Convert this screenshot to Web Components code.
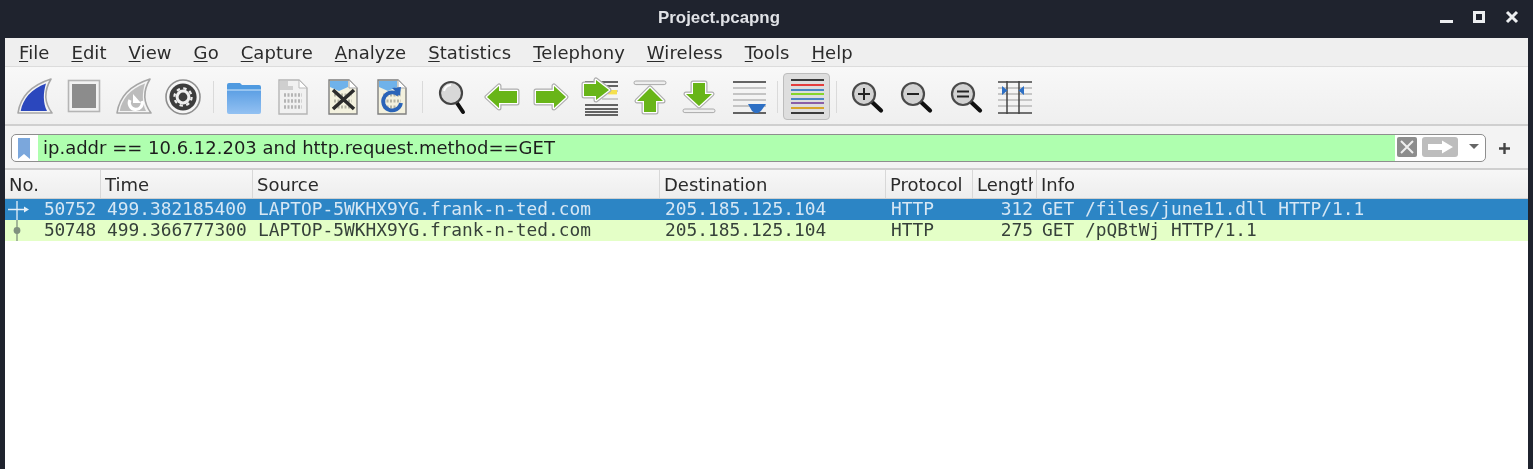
<!DOCTYPE html>
<html>
<head>
<meta charset="utf-8">
<title>Project.pcapng</title>
<style>
  html, body { margin: 0; height: 100%; background: #1f232e; overflow: hidden; }
  body { font-family: "DejaVu Sans", sans-serif; }
</style>
</head>
<body>
<ws-window title="Project.pcapng">
  <ws-menubar items="File,Edit,View,Go,Capture,Analyze,Statistics,Telephony,Wireless,Tools,Help"></ws-menubar>
  <ws-toolbar></ws-toolbar>
  <ws-filter value="ip.addr == 10.6.12.203 and http.request.method==GET"></ws-filter>
  <ws-packets></ws-packets>
</ws-window>

<script>
const arrowShape = (d) => `<path d="${d}" fill="none" stroke="#adadad" stroke-width="5" stroke-linejoin="round"/><path d="${d}" fill="#fff" stroke="#fff" stroke-width="2.6" stroke-linejoin="round"/><path d="${d}" fill="#68b518"/>`;
const lines = (ys, color, x1 = 2, x2 = 34, w = 1.4) => ys.map(y => `<path d="M${x1} ${y}H${x2}" stroke="${color}" stroke-width="${w}"/>`).join("");
const lens = (inner = "") => `<path d="M23 23l9 8.5" stroke="#111" stroke-width="4.2" stroke-linecap="round"/><circle cx="15" cy="15" r="11" fill="#d2d2d2" stroke="#4a4a4a" stroke-width="2.2"/>${inner}`;
const fileBase = `<path d="M4 1H24L32 9V35H4Z" fill="#f3f1de" stroke="#7f7f7f" stroke-width="1.4"/><path d="M24 1V9H32Z" fill="#fff" stroke="#a5a5a5"/><path d="M5 2H23V8L14 12 5 8Z" fill="#6fb2ea"/><path d="M9 16h18M9 22h18M9 28h18" stroke="#b4b4a4" stroke-width="3" stroke-dasharray="2 1.5"/>`;
const FIN = "M1 34C3 20 12 7 34 0 28 10 26 22 35 34Z";
const FIN_IN = "M3.7 32C6 20 14 10 29 4.5 26 14 26 24 30 32Z";

const ICONS = {
  shark: `<path d="${FIN}" fill="#f4f4f4" stroke="#a6a6a6" stroke-width="1.6" stroke-linejoin="round"/><path d="${FIN_IN}" fill="#2b47bd"/>`,
  stop: `<rect x="1.5" y="1.5" width="31" height="31" fill="#f2f2f2" stroke="#b5b5b5" stroke-width="1.6"/><rect x="5" y="5" width="24" height="24" fill="#8c8c8c"/>`,
  restart: `<path d="${FIN}" fill="#f4f4f4" stroke="#a6a6a6" stroke-width="1.6" stroke-linejoin="round"/><path d="${FIN_IN}" fill="#bcbcbc"/><path d="M14 21a6.5 6.5 0 1 0 12 1" fill="none" stroke="#fff" stroke-width="3.2"/><path d="M17 15v9h8z" fill="#fff"/>`,
  options: `<circle cx="18" cy="18" r="17" fill="#f6f6f6" stroke="#8f8f8f" stroke-width="1.6"/><circle cx="18" cy="18" r="13.6" fill="#3d3d3d"/><circle cx="18" cy="18" r="7.4" fill="#efefef"/><circle cx="18" cy="18" r="8.6" fill="none" stroke="#efefef" stroke-width="2.2" stroke-dasharray="3.4 3.35"/><circle cx="18" cy="18" r="4.4" fill="#3d3d3d"/>`,
  folder: `<defs><linearGradient id="fg" x1="0" y1="0" x2="0" y2="1"><stop offset="0" stop-color="#5c9fe4"/><stop offset="1" stop-color="#93c1f2"/></linearGradient></defs><path d="M1 6Q1 4 3 4H14L16 6H33Q35 6 35 8V11H1Z" fill="#4f9ae0"/><path d="M1 11H35V33Q35 35 33 35H3Q1 35 1 33Z" fill="url(#fg)"/><path d="M1 11H35" stroke="#d6e9fb" stroke-width="1.2"/>`,
  file: `<path d="M4 1H24L32 9V35H4Z" fill="#f1f1f1" stroke="#b5b5b5" stroke-width="1.4"/><path d="M24 1V9H32Z" fill="#fff" stroke="#bbb"/><path d="M5 2H13V7H18V11H5Z" fill="#cfcfcf"/><path d="M9 16h18M9 22h18M9 28h18" stroke="#b4b4b4" stroke-width="3.4" stroke-dasharray="2 1.5"/>`,
  close: `${fileBase}<path d="M8 11L29 30M29 11L8 30" stroke="#2c2c2c" stroke-width="3.6"/>`,
  reload: `${fileBase}<path d="M24.5 16A9 9 0 1 0 27 24" fill="none" stroke="#2a64b8" stroke-width="3.8"/><path d="M18 9l9 -1-1 9z" fill="#2a64b8"/>`,
  find: `<path d="M23 24l6 9" stroke="#111" stroke-width="4" stroke-linecap="round"/><circle cx="17" cy="14" r="11" fill="#d8d8d8" stroke="#444" stroke-width="2.2"/><path d="M10 12a8 8 0 0 1 7-6" stroke="#fff" stroke-width="2" fill="none"/>`,
  back: arrowShape("M3 18L15 7V12H33V24H15V29Z"),
  forward: arrowShape("M33 18L21 7V12H3V24H21V29Z"),
  goto: `${lines([3, 7, 26, 30, 33, 36], "#333", 3, 36, 1.5)}${lines([12, 20], "#b8b8b8", 20, 36, 1.4)}<rect x="26" y="11" width="9" height="4.4" fill="#f5e04e"/>${arrowShape("M27 11L14 1V5H2V17H14V21Z")}`,
  top: `<rect x="2" y="2" width="32" height="3.6" rx="1.8" fill="#eee" stroke="#aaa"/>${arrowShape("M18 9L5 22H12V33H24V22H31Z")}`,
  bottom: `<rect x="2" y="30" width="32" height="3.6" rx="1.8" fill="#eee" stroke="#aaa"/>${arrowShape("M18 27L31 15H24V4H12V15H5Z")}`,
  autoscroll: `${lines([3, 34], "#333", 2, 35, 1.6)}${lines([9, 15, 21, 27], "#b5b5b5", 2, 35, 1.5)}<path d="M17 25H35L30 32 27 34H24L21 32Z" fill="#2d6fc4"/>`,
  colorize: `${lines([1, 34], "#3a3a3a", 2, 35, 1.8)}${lines([6], "#e53d3d", 2, 35, 1.8)}${lines([11, 20], "#4a86c4", 2, 35, 1.8)}${lines([15], "#86d52d", 2, 35, 1.8)}${lines([24], "#8a5fa8", 2, 35, 1.8)}${lines([29], "#d7a52d", 2, 35, 1.8)}`,
  zoomin: lens(`<path d="M9 15H21M15 9V21" stroke="#222" stroke-width="2"/>`),
  zoomout: lens(`<path d="M9 15H21" stroke="#222" stroke-width="2"/>`),
  zoomnormal: lens(`<path d="M9 12.5H21M9 17.5H21" stroke="#222" stroke-width="2"/>`),
  resize: `${lines([3, 34], "#444", 1, 35, 1.5)}${lines([9, 15, 21, 27], "#b9b9b9", 1, 35, 1.4)}<path d="M10 2V35M22 2V35" stroke="#444" stroke-width="1.5"/><path d="M5 7L10.5 11.5 5 16ZM27 7L21.5 11.5 27 16Z" fill="#2d6fc4"/>`,
};

class WsWindow extends HTMLElement {
  constructor() {
    super();
    this.attachShadow({ mode: "open" });
    this.shadowRoot.innerHTML = `
      <style>
        :host { display: flex; flex-direction: column; height: 469px; filter: blur(0.45px); }
        .title {
          height: 38px; flex: none; display: flex; align-items: center; justify-content: center;
          position: relative; color: #dfe1e5; font: bold 16.9px "Liberation Sans", sans-serif;
          background: #1f232e; padding: 0 95px 2px 0; box-sizing: border-box;
        }
        .ctl { position: absolute; right: 0; top: 0; }
        .ctl svg { display: block; }
        .body { flex: 1; margin: 0 5px; background: #fff; display: flex; flex-direction: column; min-height: 0; }
      </style>
      <div class="title"><span id="t"></span>
        <div class="ctl">
          <svg width="110" height="30" viewBox="0 0 110 30" fill="none" stroke="#eceef0" stroke-width="3">
            <path d="M17 21.5H30"/>
            <path d="M51.5 12.5H60.5V21.5H51.5Z"/>
            <path d="M84 12L94 22M94 12L84 22"/>
          </svg>
        </div>
      </div>
      <div class="body"><slot></slot></div>`;
  }
  connectedCallback() {
    this.shadowRoot.querySelector("#t").textContent = this.getAttribute("title");
  }
}

class WsMenubar extends HTMLElement {
  constructor() {
    super();
    this.attachShadow({ mode: "open" });
  }
  connectedCallback() {
    const items = this.getAttribute("items").split(",");
    this.shadowRoot.innerHTML = `
      <style>
        :host { display: flex; height: 29px; background: #efefef; border-bottom: 1px solid #dcdcdc;
          box-sizing: border-box; padding-left: 14px; gap: 22px; align-items: center; letter-spacing: .07px;
          font: 18px "DejaVu Sans", sans-serif; color: #2b2b2b; }
        u { text-underline-offset: 2px; }
      </style>
      ${items.map(i => `<span><u>${i[0]}</u>${i.slice(1)}</span>`).join("")}`;
  }
}

class WsTool extends HTMLElement {
  constructor() {
    super();
    this.attachShadow({ mode: "open" });
  }
  connectedCallback() {
    this.shadowRoot.innerHTML = `
      <style>
        :host { display: flex; width: 49.4px; height: 47px; align-items: center; justify-content: center; flex: none; box-sizing: border-box; }
        :host([checked]) { width: 47px; background: #dedede; border: 1px solid #bdbdbd; border-radius: 4px; }
        svg { display: block; }
      </style>
      <svg width="36" height="36" viewBox="0 0 36 36" overflow="visible">${ICONS[this.getAttribute("icon")]}</svg>`;
  }
}

class WsToolbar extends HTMLElement {
  constructor() {
    super();
    this.attachShadow({ mode: "open" });
    const group = (names) => names.map(n => `<ws-tool icon="${n}"></ws-tool>`).join("");
    this.shadowRoot.innerHTML = `
      <style>
        :host { display: flex; height: 59px; box-sizing: border-box; align-items: center; padding: 2px 0 0 5.5px;
          background: linear-gradient(#f8f8f8, #efefef); border-bottom: 2px solid #cfcfcf; }
        i { width: 1px; height: 32px; background: #dadada; margin: 0 5px; flex: none; }
        ws-tool[checked] { margin: 0 1px 0 1px; }
        i.a { margin: 0 4px 0 4px; }
      </style>
      ${group(["shark", "stop", "restart", "options"])}<i></i>
      ${group(["folder", "file", "close", "reload"])}<i></i>
      ${group(["find", "back", "forward", "goto", "top", "bottom", "autoscroll"])}
      <i class="a"></i><ws-tool icon="colorize" checked></ws-tool><i></i>
      ${group(["zoomin", "zoomout", "zoomnormal", "resize"])}`;
  }
}

class WsFilter extends HTMLElement {
  constructor() {
    super();
    this.attachShadow({ mode: "open" });
  }
  connectedCallback() {
    this.shadowRoot.innerHTML = `
      <style>
        :host { display: flex; height: 44px; box-sizing: border-box; align-items: flex-start; padding: 8px 0 0 6px;
          background: #f3f3f3; border-bottom: 2px solid #cfcfcf; font: 18px "DejaVu Sans", sans-serif; color: #1d1d1d; }
        .box { width: 1475px; height: 28px; box-sizing: border-box; display: flex; align-items: stretch;
          background: #fff; border: 1px solid #8e8e8e; border-radius: 5px; flex: none; }
        .mark { width: 26px; flex: none; display: flex; align-items: center; justify-content: center; padding-right: 2px; box-sizing: border-box; }
        .val { flex: 1; background: #afffaf; padding-left: 5px; line-height: 25px; white-space: nowrap; }
        .tail { width: 90px; flex: none; display: flex; align-items: center; }
        svg { display: block; }
        .plus { margin: 8px 0 0 12px; }
      </style>
      <div class="box">
        <div class="mark"><svg width="12" height="21" viewBox="0 0 12 21"><path d="M0 0H12V21L6 16 0 21Z" fill="#7ba7dc"/></svg></div>
        <div class="val">${this.getAttribute("value")}</div>
        <div class="tail">
          <svg width="90" height="26" viewBox="0 0 90 26">
            <rect x="2" y="2" width="20" height="20" rx="2" fill="#8d8d8d"/>
            <path d="M6 6L18 18M18 6L6 18" stroke="#eee" stroke-width="2"/>
            <rect x="27" y="2" width="36" height="20" rx="3" fill="#bdbdbd"/>
            <path d="M33 9H47V5.5L58 12 47 18.5V15H33Z" fill="#fff"/>
            <path d="M74 9H84L79 14Z" fill="#666"/>
          </svg>
        </div>
      </div>
      <svg class="plus" width="13" height="13" viewBox="0 0 13 13"><path d="M6.5 1V12M1 6.5H12" stroke="#444" stroke-width="2.4"/></svg>`;
  }
}

const COLS = "96px 152px 407px 226px 87px 64px 1fr";

class WsPackets extends HTMLElement {
  constructor() {
    super();
    this.attachShadow({ mode: "open" });
    const heads = ["No.", "Time", "Source", "Destination", "Protocol", "Length", "Info"];
    this.shadowRoot.innerHTML = `
      <style>
        :host { display: block; flex: 1; background: #fff; }
        .head { display: grid; grid-template-columns: ${COLS}; height: 29px; box-sizing: border-box;
          border-bottom: 1px solid #d0d0d0; background: linear-gradient(#f7f7f7, #eeeeee);
          font: 18px "DejaVu Sans", sans-serif; color: #2a2a2a; }
        .head span { padding: 4px 3px 0 4px; border-right: 1px solid #d8d8d8; white-space: nowrap; min-width: 0; }
        .head span b { display: block; font-weight: normal; overflow: hidden; }
        .head span:last-child { border-right: 0; }
      </style>
      <div class="head">${heads.map(h => `<span><b>${h}</b></span>`).join("")}</div>
      <ws-row kind="first" no="50752" time="499.382185400" src="LAPTOP-5WKHX9YG.frank-n-ted.com" dst="205.185.125.104" proto="HTTP" len="312" info="GET /files/june11.dll HTTP/1.1" selected></ws-row>
      <ws-row kind="last" no="50748" time="499.366777300" src="LAPTOP-5WKHX9YG.frank-n-ted.com" dst="205.185.125.104" proto="HTTP" len="275" info="GET /pQBtWj HTTP/1.1"></ws-row>`;
  }
}

class WsRow extends HTMLElement {
  constructor() {
    super();
    this.attachShadow({ mode: "open" });
  }
  connectedCallback() {
    const a = (n) => this.getAttribute(n);
    const mark = a("kind") === "first"
      ? `<path d="M12 2V21M3 10.5H21" stroke="#e6f0f8" stroke-width="1.3"/><path d="M24 10.5L19 7.5V13.5Z" fill="#e6f0f8"/>`
      : `<path d="M12 0V21" stroke="#7f917f" stroke-width="1.3"/><circle cx="12" cy="10.5" r="3.4" fill="#7f917f"/>`;
    this.shadowRoot.innerHTML = `
      <style>
        :host { display: grid; grid-template-columns: ${COLS}; height: 21px; align-items: start; white-space: pre;
          background: #e4ffc7; color: #36413a; font: 17.85px/20px "DejaVu Sans Mono", monospace; }
        :host([selected]) { background: #2c85c5; color: #d6e7f4; }
        .no { display: flex; align-items: flex-start; justify-content: space-between; padding-right: 5px; }
        .no span { letter-spacing: -.35px; }
        .no svg { display: block; }
        .t { padding-left: 6px; }
        .p { padding-left: 5px; }
        .r { text-align: right; padding-right: 4px; }
      </style>
      <div class="no"><svg width="24" height="21" viewBox="0 0 24 21">${mark}</svg><span>${a("no")}</span></div>
      <div class="t">${a("time")}</div>
      <div class="p">${a("src")}</div>
      <div class="p">${a("dst")}</div>
      <div class="p">${a("proto")}</div>
      <div class="r">${a("len")}</div>
      <div class="p">${a("info")}</div>`;
  }
}

customElements.define("ws-window", WsWindow);
customElements.define("ws-menubar", WsMenubar);
customElements.define("ws-tool", WsTool);
customElements.define("ws-toolbar", WsToolbar);
customElements.define("ws-filter", WsFilter);
customElements.define("ws-row", WsRow);
customElements.define("ws-packets", WsPackets);
</script>
</body>
</html>
